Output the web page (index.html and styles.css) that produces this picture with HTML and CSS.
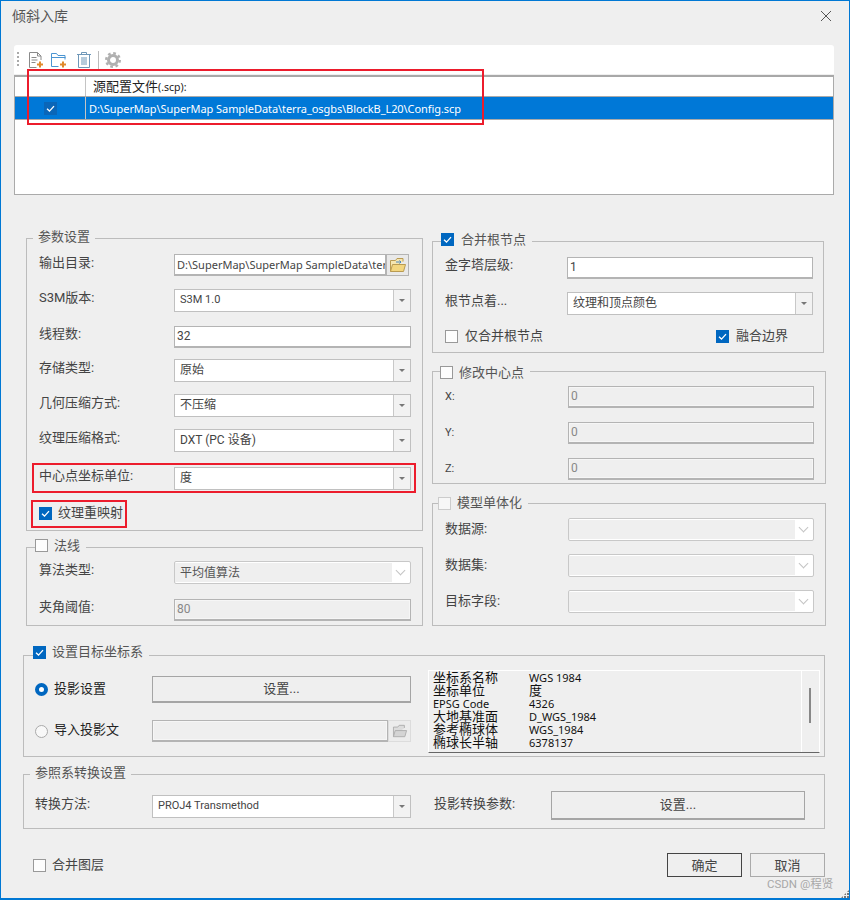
FILE: index.html
```html
<!DOCTYPE html>
<html lang="zh-CN">
    <head>
        <meta charset="UTF-8" />
        <meta name="viewport" content="width=device-width, initial-scale=1.0" />
        <title>倾斜入库</title>
        <link rel="stylesheet" href="styles.css">
    </head>
    <body>
        <div class="dialog">
            <header class="titlebar">
                <span class="title">倾斜入库</span>
                <svg class="close" width="12" height="12" viewBox="0 0 12 12"><path d="M1 1l10 10M11 1L1 11" stroke="#555" fill="none"/></svg>
            </header>

            <div class="toolbar">
                <span class="grip"></span>
                <svg class="tool tool-doc" width="18" height="18" viewBox="0 0 18 18">
                    <path d="M2.500 1.500h8l3.500 3.500v4M2.500 1.500v15h7M10.500 1.500v3.500h3.500" fill="#fff" stroke="#8a8a8a"/>
                    <path d="M4.500 6.500h5M4.500 9h6M4.500 11.500h4" stroke="#8a8a8a" fill="none"/>
                    <path d="M13 10.500v6M10 13.500h6" stroke="#e08a2c" stroke-width="2" fill="none"/>
                </svg>
                <svg class="tool tool-folder" width="18" height="18" viewBox="0 0 18 18">
                    <path d="M1.500 15.500v-13h5l1.500 2h7v4M1.500 15.500h7M1.500 6.500h14" fill="none" stroke="#4b95d2"/>
                    <path d="M13 10.500v6M10 13.500h6" stroke="#e08a2c" stroke-width="2" fill="none"/>
                </svg>
                <svg class="tool tool-trash" width="16" height="18" viewBox="0 0 16 18">
                    <path d="M1 3.500h14M5.500 3.500v-2h5v2M2.500 3.500v13h11v-13" fill="none" stroke="#6f97b8"/>
                    <path d="M6 6v8M10 6v8M8 6v8" stroke="#6f97b8" fill="none"/>
                </svg>
                <span class="tool-sep"></span>
                <svg class="tool" width="16" height="16" viewBox="0 0 16 16">
                    <circle cx="8" cy="8" r="4.500" fill="none" stroke="#b0b0b0" stroke-width="3"/>
                    <circle cx="8" cy="8" r="6.800" fill="none" stroke="#b0b0b0" stroke-width="2.400" stroke-dasharray="2.700 2.640"/>
                </svg>
            </div>

            <div class="filelist">
                <div class="filelist-head">
                    <span class="col-check"></span>
                    <span class="col-head">源配置文件<small>(.scp):</small></span>
                </div>
                <div class="filelist-row">
                    <span class="col-check">
                        <span class="row-check">
                            <svg width="13" height="13" viewBox="0 0 13 13"><path d="M3 6.800l2.500 2.300 4.500-5" stroke="#fff" stroke-width="1.300" fill="none"/></svg>
                        </span>
                    </span>
                    <span class="col-path">D:\SuperMap\SuperMap SampleData\terra_osgbs\BlockB_L20\Config.scp</span>
                </div>
            </div>

            <div class="columns">
                <div class="col-left">
                    <fieldset class="group group-params">
                        <legend class="legend-text lift"><span>参数设置</span></legend>
                        <div class="row mt7">
                            <label class="first-label">输出目录:</label>
                            <div class="pathfield pathfield-short">
                                <div class="input path-input">D:\SuperMap\SuperMap SampleData\ter</div>
                                <span class="browse">
                                    <svg width="18" height="16" viewBox="0 0 18 16">
                                        <path d="M1.500 14.500v-11h5l1.500-2h6v3" fill="#f6e6b0" stroke="#b99b52"/>
                                        <path d="M1.500 14.500l2-7h13l-2 7z" fill="#f3d67f" stroke="#b99b52"/>
                                        <path d="M7 5h5l-1.500-1.500M12 5l-1.500 1.500" stroke="#4a86c0" fill="none"/>
                                    </svg>
                                </span>
                            </div>
                        </div>
                        <div class="row mt13">
                            <label>S3M版本:</label>
                            <div class="select"><span class="value latin">S3M 1.0</span><span class="caret"></span></div>
                        </div>
                        <div class="row mt13">
                            <label>线程数:</label>
                            <div class="input">32</div>
                        </div>
                        <div class="row mt11">
                            <label>存储类型:</label>
                            <div class="select"><span class="value">原始</span><span class="caret"></span></div>
                        </div>
                        <div class="row mt12">
                            <label>几何压缩方式:</label>
                            <div class="select"><span class="value">不压缩</span><span class="caret"></span></div>
                        </div>
                        <div class="row mt12">
                            <label>纹理压缩格式:</label>
                            <div class="select"><span class="value">DXT (PC 设备)</span><span class="caret"></span></div>
                        </div>
                        <div class="row mt15">
                            <label>中心点坐标单位:</label>
                            <div class="select"><span class="value">度</span><span class="caret"></span></div>
                        </div>
                        <div class="check-line remap">
                            <span class="check on"></span><span>纹理重映射</span>
                        </div>
                    </fieldset>

                    <fieldset class="group group-normal">
                        <legend class="lift"><span class="check"></span><span>法线</span></legend>
                        <div class="row mt6">
                            <label>算法类型:</label>
                            <div class="select off"><span class="value">平均值算法</span><span class="chevron"></span></div>
                        </div>
                        <div class="row mt14">
                            <label>夹角阈值:</label>
                            <div class="input off">80</div>
                        </div>
                    </fieldset>
                </div>

                <div class="col-right">
                    <fieldset class="group group-root">
                        <legend class="lift"><span class="check on"></span><span>合并根节点</span></legend>
                        <div class="row-r mt7">
                            <label>金字塔层级:</label>
                            <div class="input">1</div>
                        </div>
                        <div class="row-r mt13">
                            <label>根节点着...</label>
                            <div class="select"><span class="value">纹理和顶点颜色</span><span class="caret"></span></div>
                        </div>
                        <div class="check-pair">
                            <div class="check-line"><span class="check"></span><span>仅合并根节点</span></div>
                            <div class="check-line"><span class="check on"></span><span>融合边界</span></div>
                        </div>
                    </fieldset>

                    <fieldset class="group group-center">
                        <legend class="drop"><span class="check"></span><span>修改中心点</span></legend>
                        <div class="row-r shifted mt6">
                            <label class="small">X:</label>
                            <div class="input off">0</div>
                        </div>
                        <div class="row-r shifted mt13">
                            <label class="small">Y:</label>
                            <div class="input off">0</div>
                        </div>
                        <div class="row-r shifted mt13">
                            <label class="small">Z:</label>
                            <div class="input off">0</div>
                        </div>
                    </fieldset>

                    <fieldset class="group group-model">
                        <legend><span class="check pale"></span><span>模型单体化</span></legend>
                        <div class="row-r shifted mt7">
                            <label>数据源:</label>
                            <div class="select off"><span class="value"></span><span class="chevron"></span></div>
                        </div>
                        <div class="row-r shifted mt13">
                            <label>数据集:</label>
                            <div class="select off"><span class="value"></span><span class="chevron"></span></div>
                        </div>
                        <div class="row-r shifted mt13">
                            <label>目标字段:</label>
                            <div class="select off"><span class="value"></span><span class="chevron"></span></div>
                        </div>
                    </fieldset>
                </div>
            </div>

            <fieldset class="group group-target">
                <legend class="lift-more"><span class="check on"></span><span>设置目标坐标系</span></legend>
                <div class="target-body">
                    <div class="target-left">
                        <div class="row-t">
                            <div class="radio-line"><span class="radio on"></span><span class="dark">投影设置</span></div>
                            <div class="button wide">设置...</div>
                        </div>
                        <div class="row-t row-import">
                            <div class="radio-line"><span class="radio"></span><span class="dark">导入投影文</span></div>
                            <div class="pathfield">
                                <div class="input off"></div>
                                <span class="browse off">
                                    <svg width="16" height="14" viewBox="0 0 18 16">
                                        <path d="M1.500 14.500v-11h5l1.500-2h6v3" fill="#dcdcdc" stroke="#aaa"/>
                                        <path d="M1.500 14.500l2-7h13l-2 7z" fill="#d4d4d4" stroke="#aaa"/>
                                    </svg>
                                </span>
                            </div>
                        </div>
                    </div>
                    <div class="srs-info">
                        <div class="srs-rows">
                            <div class="srs-row"><span>坐标系名称</span><span>WGS 1984</span></div>
                            <div class="srs-row"><span>坐标单位</span><span>度</span></div>
                            <div class="srs-row"><span>EPSG Code</span><span>4326</span></div>
                            <div class="srs-row"><span>大地基准面</span><span>D_WGS_1984</span></div>
                            <div class="srs-row"><span>参考椭球体</span><span>WGS_1984</span></div>
                            <div class="srs-row"><span>椭球长半轴</span><span>6378137</span></div>
                        </div>
                        <div class="srs-scroll"><span class="srs-thumb"></span></div>
                    </div>
                </div>
            </fieldset>

            <fieldset class="group group-transform">
                <legend class="legend-text lift"><span>参照系转换设置</span></legend>
                <div class="transform-row">
                    <label class="t-label">转换方法:</label>
                    <div class="select t-select"><span class="value latin">PROJ4 Transmethod</span><span class="caret"></span></div>
                    <label class="t-label t-label2">投影转换参数:</label>
                    <div class="button t-button">设置...</div>
                </div>
            </fieldset>

            <footer class="actions">
                <div class="check-line"><span class="check"></span><span>合并图层</span></div>
                <div class="action-buttons">
                    <div class="btn default">确定</div>
                    <div class="btn">取消</div>
                </div>
            </footer>

            <!-- annotations drawn on top of the screenshot -->
            <span class="mark mark-list"></span>
            <span class="mark mark-unit"></span>
            <span class="mark mark-remap"></span>
            <span class="watermark">CSDN @程贤</span>
            <span class="resize-grip"></span>
        </div>
    </body>
</html>
```

FILE: styles.css
```css
html, body {
    margin: 0;
    padding: 0;
}
body {
    font: 13px/16px Roboto, "Noto Sans CJK SC", sans-serif;
    color: #444;
}
.dialog {
    position: relative;
    box-sizing: border-box;
    width: 850px;
    height: 900px;
    overflow: hidden;
    background: #efefef;
    border: 1px solid #0078d4;
    border-bottom-width: 2px;
}

/* title */
.titlebar {
    display: flex;
    justify-content: space-between;
    align-items: center;
    height: 30px;
    padding: 0 17px 0 11px;
    margin-bottom: 14px;
}
.title {
    font-size: 14px;
    color: #555;
}

/* toolbar + list */
.toolbar {
    display: flex;
    align-items: center;
    box-sizing: border-box;
    height: 29px;
    margin: 0 15px 0 13px;
    padding-left: 3px;
    background: #fff;
    border-radius: 3px 3px 0 0;
}
.grip {
    width: 2px;
    height: 16px;
    margin-right: 8px;
    background: repeating-linear-gradient(#aaa 0 2px, transparent 2px 4px);
}
.tool {
    flex: none;
}
.tool-doc {
    margin-right: 5px;
}
.tool-folder {
    margin-right: 8px;
}
.tool-sep {
    width: 1px;
    height: 18px;
    margin: 0 6px;
    background: #bbb;
}
.filelist {
    box-sizing: border-box;
    height: 120px;
    margin: 1px 15px 0 13px;
    background: #fff;
    border: 1px solid #aaa;
    border-top: 2px solid #a8a8a8;
}
.filelist-head {
    display: flex;
    height: 19px;
    border-bottom: 1px solid #aaa;
    color: #222;
}
.filelist-row {
    display: flex;
    height: 22px;
    background: #0078d7;
    border-bottom: 1px solid #aaa;
    color: #fff;
    font-family: "Noto Sans", sans-serif;
    font-size: 11px;
    line-height: 24px;
}
.col-check {
    flex: none;
    display: flex;
    align-items: center;
    justify-content: center;
    width: 70px;
    border-right: 1px solid #c4c4c4;
}
.col-head {
    padding-left: 7px;
    line-height: 20px;
}
.col-head small {
    font-family: "Noto Sans", sans-serif;
    font-size: 10.500px;
}
.col-path {
    padding-left: 3px;
    letter-spacing: -0.070px;
    white-space: nowrap;
}
.row-check {
    display: flex;
    background: #0a66b8;
}

/* groups */
.group {
    box-sizing: border-box;
    min-width: 0;
    margin: 0;
    padding: 0 12px;
    border: 1px solid #bcbcbc;
}
.group legend {
    display: flex;
    align-items: center;
    gap: 6px;
    height: 16px;
    margin-left: -4px;
    padding: 0 6px 0 0;
    color: #555;
}
.group legend.legend-text {
    margin-left: -6px;
    padding: 0 5px;
}
.group legend.lift > span {
    margin-bottom: 3px;
}
.group legend.lift-more > span {
    margin-bottom: 6px;
}
.group legend.drop > span {
    margin-top: 3px;
}
.columns {
    display: grid;
    grid-template-columns: 397px 394px;
    column-gap: 9px;
    margin: 35px 0 0 25px;
}
.group-params {
    height: 301px;
}
.group-normal {
    height: 87px;
    margin-top: 8px;
}
.group-root {
    width: 392px;
    height: 120px;
    margin-top: 3px;
}
.group-root legend {
    gap: 7px;
}
.group-center {
    height: 121px;
    margin-top: 10px;
}
.group-center legend {
    margin-left: -5px;
}
.group-model {
    height: 131px;
    margin-top: 11px;
}
.group-model legend {
    margin-left: -7px;
}
.group-model .row-r label {
    padding-bottom: 1px;
}
.group-target {
    width: 802px;
    height: 110px;
    margin: 21px 0 0 22px;
    padding: 0;
}
.group-target legend {
    margin-left: 9px;
}
.group-transform {
    width: 802px;
    height: 63px;
    margin: 9px 0 0 22px;
    padding: 0;
}
.group-transform legend.legend-text {
    margin-left: 6px;
}

/* form rows */
.row {
    display: grid;
    grid-template-columns: 135px 237px;
    align-items: center;
    height: 23px;
}
.row-r {
    display: grid;
    grid-template-columns: 122px 246px;
    align-items: center;
    height: 23px;
}
.row-r.shifted {
    grid-template-columns: 123px 246px;
}
.row label, .row-r label {
    padding-bottom: 5px;
}
.row label.first-label {
    padding-bottom: 3px;
}
.row-r label.small {
    padding-bottom: 0;
    font-size: 11px;
}
.mt6 { margin-top: 6px; }
.mt7 { margin-top: 7px; }
.mt11 { margin-top: 11px; }
.mt12 { margin-top: 12px; }
.mt13 { margin-top: 13px; }
.mt14 { margin-top: 14px; }
.mt15 { margin-top: 15px; }

.input {
    box-sizing: border-box;
    height: 22px;
    padding: 0 2px;
    overflow: hidden;
    background: #fff;
    border: 1px solid #b4b4b4;
    border-bottom-width: 2px;
    font-size: 12px;
    line-height: 19px;
    white-space: nowrap;
}
.input.off {
    background: #efefef;
    color: #888;
    box-shadow: inset 0 0 0 1px #f6f6f6;
}
.input.path-input {
    padding-right: 0;
    font-family: "Noto Sans", sans-serif;
    font-size: 11px;
}
.select {
    display: flex;
    box-sizing: border-box;
    height: 23px;
    background: #fff;
    border: 1px solid #c0c0c0;
    font-size: 12px;
    line-height: 20px;
}
.value {
    flex: 1;
    padding-left: 5px;
    white-space: nowrap;
}
.value.latin {
    font-size: 11px;
}
.caret {
    position: relative;
    flex: none;
    width: 16px;
    background: #f2f2f2;
    border-left: 1px solid #c8c8c8;
}
.caret::after {
    content: "";
    position: absolute;
    left: 5px;
    top: 9px;
    border: 3px solid transparent;
    border-top: 3px solid #777;
}
.select.off {
    border-color: #c8c8c8;
    border-radius: 2px;
    color: #555;
}
.select.off .value {
    margin: 1px 0;
    background: #efefef;
}
.chevron {
    position: relative;
    flex: none;
    width: 18px;
}
.chevron::after {
    content: "";
    position: absolute;
    left: 5px;
    top: 5px;
    width: 6px;
    height: 6px;
    border: solid #c4c4c4;
    border-width: 0 1px 1px 0;
    transform: rotate(45deg);
}
.pathfield {
    display: flex;
    height: 22px;
    align-items: stretch;
}
.pathfield-short {
    width: 235px;
}
.pathfield .input {
    flex: 1;
    min-width: 0;
}
.browse {
    display: flex;
    align-items: center;
    justify-content: center;
    flex: none;
    width: 23px;
    box-sizing: border-box;
    background: #e9e9e9;
    border: 1px solid #b4b4b4;
}
.browse.off {
    background: #ececec;
    border-color: #dcdcdc;
}

/* checks */
.check {
    flex: none;
    display: inline-block;
    box-sizing: border-box;
    width: 13px;
    height: 13px;
    background: #fdfdfd;
    border: 1px solid #999;
}
.check.pale {
    background: #f7f7f7;
    border-color: #ccc;
}
.check.on {
    border: none;
    background: #0067c0 url("data:image/svg+xml,%3Csvg xmlns='http://www.w3.org/2000/svg' width='13' height='13'%3E%3Cpath d='M3 6.800l2.500 2.300 4.500-5' stroke='%23fff' stroke-width='1.300' fill='none'/%3E%3C/svg%3E");
}
.check-line {
    display: flex;
    align-items: center;
    gap: 6px;
}
.remap {
    margin-top: 15px;
}
.check-pair {
    display: flex;
    justify-content: space-between;
    width: 343px;
    margin-top: 13px;
}
.check-pair .check-line {
    gap: 7px;
}

/* target srs */
.target-body {
    display: grid;
    grid-template-columns: 404px 392px;
}
.target-left {
    padding: 13px 0 0 11px;
}
.row-t {
    display: grid;
    grid-template-columns: 117px 259px;
    align-items: center;
}
.row-import {
    margin-top: 17px;
}
.radio-line {
    display: flex;
    align-items: center;
    gap: 6px;
}
.radio-line .dark {
    margin-bottom: 2px;
}
.dark {
    color: #222;
}
.radio {
    box-sizing: border-box;
    width: 13px;
    height: 13px;
    background: #f8f8f8;
    border: 1px solid #aaa;
    border-radius: 50%;
}
.radio.on {
    background: #fff;
    border: 4px solid #0067c0;
}
.button {
    box-sizing: border-box;
    text-align: center;
    border: 1px solid #a5a5a5;
    border-bottom-width: 2px;
    background: #efefef;
}
.button.wide {
    height: 27px;
    line-height: 23px;
}
.srs-info {
    display: flex;
    box-sizing: border-box;
    height: 83px;
    margin-top: 7px;
    border: 1px solid #fff;
    border-bottom: 1px solid #666;
    color: #111;
    font-family: "Noto Sans", "Noto Sans CJK SC", sans-serif;
}
.srs-rows {
    flex: 1;
    padding: 0 0 0 4px;
    border-right: 1px solid #fff;
}
.srs-row {
    display: grid;
    grid-template-columns: 96px auto;
    height: 13px;
    line-height: 13px;
    white-space: nowrap;
}
.srs-row span:last-child, .srs-row:nth-child(3) span:first-child {
    font-size: 11px;
}
.srs-row:nth-child(2) span:last-child {
    font-size: 13px;
}
.srs-scroll {
    flex: none;
    width: 17px;
    padding-top: 17px;
}
.srs-thumb {
    display: block;
    width: 2px;
    height: 35px;
    margin-left: 7px;
    background: #888;
}

/* transform */
.transform-row {
    display: grid;
    grid-template-columns: 117px 259px 140px 254px;
    align-items: center;
    height: 29px;
    margin: 9px 0 0 11px;
}
.t-label {
    padding-bottom: 3px;
}
.t-label2 {
    margin-left: 23px;
}
.t-select {
    margin-top: 1px;
}
.t-button {
    height: 29px;
    line-height: 25px;
}

/* footer */
.actions {
    display: flex;
    justify-content: space-between;
    align-items: center;
    width: 792px;
    margin: 24px 0 0 32px;
}
.action-buttons {
    display: flex;
    gap: 8px;
}
.btn {
    box-sizing: border-box;
    width: 75px;
    height: 24px;
    line-height: 24px;
    text-align: center;
    border: 1px solid #aaa;
}
.btn.default {
    border-color: #444;
}

/* overlays */
.mark {
    position: absolute;
    box-sizing: border-box;
    border: 2px solid #ec1c2c;
}
.mark-list {
    left: 26px;
    top: 68px;
    width: 457px;
    height: 56px;
}
.mark-unit {
    left: 31px;
    top: 462px;
    width: 384px;
    height: 30px;
}
.mark-remap {
    left: 30px;
    top: 499px;
    width: 96px;
    height: 28px;
}
.watermark {
    position: absolute;
    left: 766px;
    top: 875px;
    font-size: 11.500px;
    color: #a8a8a8;
}
.resize-grip {
    position: absolute;
    right: 0;
    bottom: 0;
    width: 8px;
    height: 8px;
    background: radial-gradient(circle at 1px 1px, #777 1px, transparent 1px) 0 0 / 3px 3px;
    clip-path: polygon(100% 0, 100% 100%, 0 100%);
}
```
